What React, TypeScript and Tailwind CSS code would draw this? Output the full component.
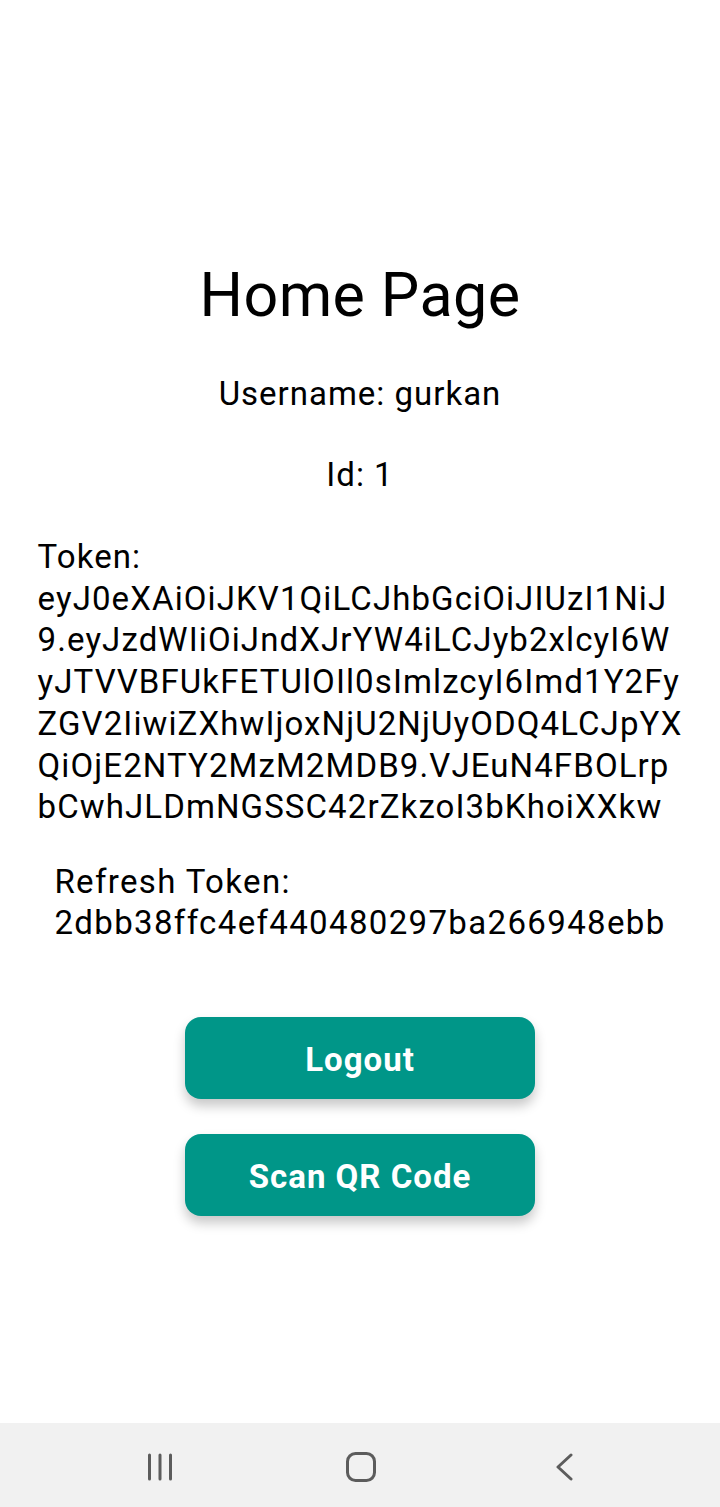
const tokenLines = [
  "eyJ0eXAiOiJKV1QiLCJhbGciOiJIUzI1NiJ",
  "9.eyJzdWIiOiJndXJrYW4iLCJyb2xlcyI6W",
  "yJTVVBFUkFETUlOIl0sImlzcyI6Imd1Y2Fy",
  "ZGV2IiwiZXhwIjoxNjU2NjUyODQ4LCJpYX",
  "QiOjE2NTY2MzM2MDB9.VJEuN4FBOLrp",
  "bCwhJLDmNGSSC42rZkzoI3bKhoiXXkw",
]

const NavBar = () => {
  return (
    <div className="h-[84px] bg-[#f1f1f1] flex items-center pl-[147px] pt-[3px]">
      <svg width="26" height="28" viewBox="0 0 26 28" fill="none" stroke="#5c5c5c" strokeWidth="3" strokeLinecap="round">
        <path d="M2.5 2v24M13 2v24M23.5 2v24" />
      </svg>
      <svg className="ml-[172px]" width="32" height="32" viewBox="0 0 32 32" fill="none" stroke="#5c5c5c" strokeWidth="3">
        <rect x="2.5" y="2.5" width="27" height="27" rx="8" />
      </svg>
      <svg className="ml-[177px]" width="20" height="28" viewBox="0 0 20 28" fill="none" stroke="#5c5c5c" strokeWidth="3" strokeLinecap="round" strokeLinejoin="round">
        <path d="M17 2L4 14l13 12" />
      </svg>
    </div>
  )
}

const App = () => {
  return (
    <div className="w-[720px] h-[1507px] bg-white flex flex-col font-['Roboto',_'Liberation_Sans',_sans-serif] text-black">
      <main className="flex-1 flex flex-col items-center pt-[259px]">
        <h1 className="text-[61px] leading-[72px] font-normal tracking-[0.4px]">Home Page</h1>
        <p className="mt-[42px] text-[33px] leading-[42px] tracking-[1px]">Username: gurkan</p>
        <p className="mt-[39px] text-[33px] leading-[42px] tracking-[1px]">Id: 1</p>
        <div className="mt-[40px] w-fit mx-auto text-left text-[33px] leading-[41.7px] tracking-[1.1px]">
          <p>Token:</p>
          {tokenLines.map((l) => (
            <p key={l}>{l}</p>
          ))}
        </div>
        <div className="mt-[33px] w-fit mx-auto text-left text-[33px] leading-[41px] tracking-[1.35px]">
          <p>Refresh Token:</p>
          <p>2dbb38ffc4ef440480297ba266948ebb</p>
        </div>
        <div className="mt-[74px] flex flex-col gap-[35px]">
          <button className="w-[350px] h-[82px] pt-[4px] rounded-[16px] bg-[#009688] text-white text-[33px] font-bold tracking-[1px] shadow-[0_7px_12px_rgba(0,0,0,0.22)]">
            Logout
          </button>
          <button className="w-[350px] h-[82px] pt-[4px] rounded-[16px] bg-[#009688] text-white text-[33px] font-bold tracking-[1px] shadow-[0_7px_12px_rgba(0,0,0,0.22)]">
            Scan QR Code
          </button>
        </div>
      </main>
      <NavBar />
    </div>
  )
}

export default App
